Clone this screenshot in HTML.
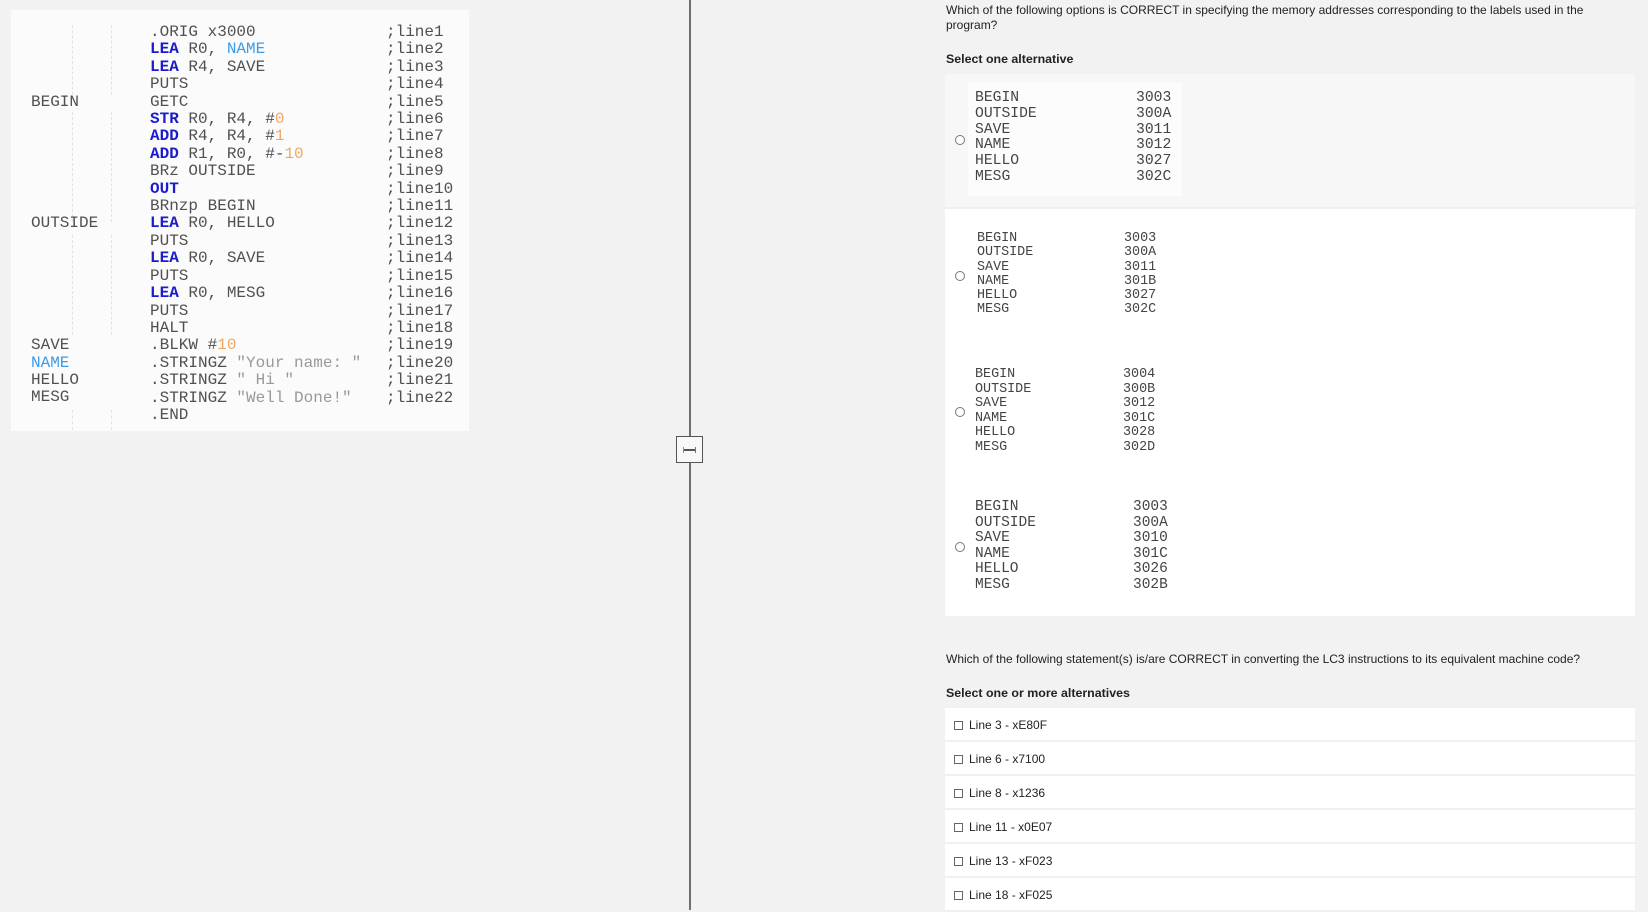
<!DOCTYPE html>
<html><head><meta charset="utf-8"><style>
*{margin:0;padding:0;box-sizing:border-box}
html,body{width:1648px;height:910px;overflow:hidden;background:#f2f2f2;font-family:"Liberation Sans",Arial,sans-serif;color:#222}
.abs{position:absolute}
.code{left:11px;top:10px;width:458px;height:421px;background:#fbfbfb}
.code div.l{position:absolute;font-family:"Liberation Mono","Courier New",monospace;font-size:16px;line-height:17.4px;color:#505050;white-space:pre}
.k{color:#1c1ccc;font-weight:bold}
.n{color:#3b9be8}
.o{color:#f0a860}
.c{color:#3a9a3a}
.s{color:#999}
.dash{position:absolute;border-left:1px dashed #e2e2e2}
.div{left:689px;top:0;width:2px;height:910px;background:#6f6f6f}
.handle{left:676px;top:436px;width:27px;height:27px;background:#f8f8f8;border:1px solid #555}
.q{font-size:12px;color:#222;line-height:15px}
.b{font-size:12.4px;font-weight:bold;color:#222}
.panel{background:#fff}
.radio{width:10px;height:10px;border:1px solid #777;border-radius:50%;background:#fff}
.opt{font-family:"Liberation Mono","Courier New",monospace;color:#444;white-space:pre}
.opt div{position:absolute}
.row{left:945px;width:690px;height:34px;background:#fff;border-bottom:2px solid #f0f0f0}
.row .cb{position:absolute;left:9px;top:13px;width:9px;height:9px;border:1px solid #666;background:#fff}
.row span{position:absolute;left:24px;top:10px;font-size:12px;color:#222}
</style></head><body>
<div class="abs code">
<div class="dash" style="left:61px;top:15px;height:70px"></div>
<div class="dash" style="left:100px;top:15px;height:70px"></div>
<div class="dash" style="left:61px;top:102px;height:110px"></div>
<div class="dash" style="left:100px;top:102px;height:110px"></div>
<div class="dash" style="left:61px;top:225px;height:100px"></div>
<div class="dash" style="left:100px;top:225px;height:100px"></div>
<div class="dash" style="left:61px;top:400px;height:20px"></div>
<div class="dash" style="left:100px;top:400px;height:20px"></div>
<div class="l" style="left:20px;top:83.6px">BEGIN</div>
<div class="l" style="left:20px;top:205.4px">OUTSIDE</div>
<div class="l" style="left:20px;top:327.2px">SAVE
<span class="n">NAME</span>
HELLO
MESG</div>
<div class="l" style="left:139px;top:14px">.ORIG x3000
<span class="k">LEA</span> R0, <span class="n">NAME</span>
<span class="k">LEA</span> R4, SAVE
PUTS
GETC
<span class="k">STR</span> R0, R4, #<span class="o">0</span>
<span class="k">ADD</span> R4, R4, #<span class="o">1</span>
<span class="k">ADD</span> R1, R0, #-<span class="o">10</span>
BRz OUTSIDE
<span class="k">OUT</span>
BRnzp BEGIN
<span class="k">LEA</span> R0, HELLO
PUTS
<span class="k">LEA</span> R0, SAVE
PUTS
<span class="k">LEA</span> R0, MESG
PUTS
HALT
.BLKW #<span class="o">10</span>
.STRINGZ <span class="s">"Your name: "</span>
.STRINGZ <span class="s">" Hi "</span>
.STRINGZ <span class="s">"Well Done!"</span>
.END</div>
<div class="l c" style="left:375px;top:14px">;line1
;line2
;line3
;line4
;line5
;line6
;line7
;line8
;line9
;line10
;line11
;line12
;line13
;line14
;line15
;line16
;line17
;line18
;line19
;line20
;line21
;line22</div>
</div>
<div class="abs div"></div>
<div class="abs handle"><div style="position:absolute;left:7px;top:12px;width:11px;height:2px;background:#555"></div><div style="position:absolute;left:6px;top:10px;width:1px;height:6px;background:#d08040"></div><div style="position:absolute;left:18px;top:10px;width:1px;height:6px;background:#4080d0"></div></div>

<div class="abs q" style="left:946px;top:3px;width:650px">Which of the following options is CORRECT in specifying the memory addresses corresponding to the labels used in the program?</div>
<div class="abs b" style="left:946px;top:52px">Select one alternative</div>
<div class="abs panel" style="left:945px;top:74px;width:690px;height:542px"></div>
<div class="abs" style="left:945px;top:74px;width:690px;height:135px;background:#f7f7f7;border-bottom:2px solid #efefef"></div>
<div class="abs" style="left:968px;top:83px;width:214px;height:113px;background:#fcfcfc"></div>

<div class="abs radio" style="left:955px;top:135px"></div>
<div class="abs opt" style="left:975px;top:91px;font-size:14.7px;line-height:15.8px"><div style="left:0">BEGIN
OUTSIDE
SAVE
NAME
HELLO
MESG</div><div style="left:161px">3003
300A
3011
3012
3027
302C</div></div>

<div class="abs radio" style="left:955px;top:271px"></div>
<div class="abs opt" style="left:977px;top:232px;font-size:13.4px;line-height:14.3px"><div style="left:0">BEGIN
OUTSIDE
SAVE
NAME
HELLO
MESG</div><div style="left:147px">3003
300A
3011
301B
3027
302C</div></div>

<div class="abs radio" style="left:955px;top:407px"></div>
<div class="abs opt" style="left:975px;top:368px;font-size:13.4px;line-height:14.5px"><div style="left:0">BEGIN
OUTSIDE
SAVE
NAME
HELLO
MESG</div><div style="left:148px">3004
300B
3012
301C
3028
302D</div></div>

<div class="abs radio" style="left:955px;top:542px"></div>
<div class="abs opt" style="left:975px;top:500px;font-size:14.5px;line-height:15.6px"><div style="left:0">BEGIN
OUTSIDE
SAVE
NAME
HELLO
MESG</div><div style="left:158px">3003
300A
3010
301C
3026
302B</div></div>

<div class="abs q" style="left:946px;top:652px">Which of the following statement(s) is/are CORRECT in converting the LC3 instructions to its equivalent machine code?</div>
<div class="abs b" style="left:946px;top:686px">Select one or more alternatives</div>
<div class="abs row" style="top:708px"><div class="cb"></div><span>Line 3 - xE80F</span></div>
<div class="abs row" style="top:742px"><div class="cb"></div><span>Line 6 - x7100</span></div>
<div class="abs row" style="top:776px"><div class="cb"></div><span>Line 8 - x1236</span></div>
<div class="abs row" style="top:810px"><div class="cb"></div><span>Line 11 - x0E07</span></div>
<div class="abs row" style="top:844px"><div class="cb"></div><span>Line 13 - xF023</span></div>
<div class="abs row" style="top:878px"><div class="cb"></div><span>Line 18 - xF025</span></div>
</body></html>
